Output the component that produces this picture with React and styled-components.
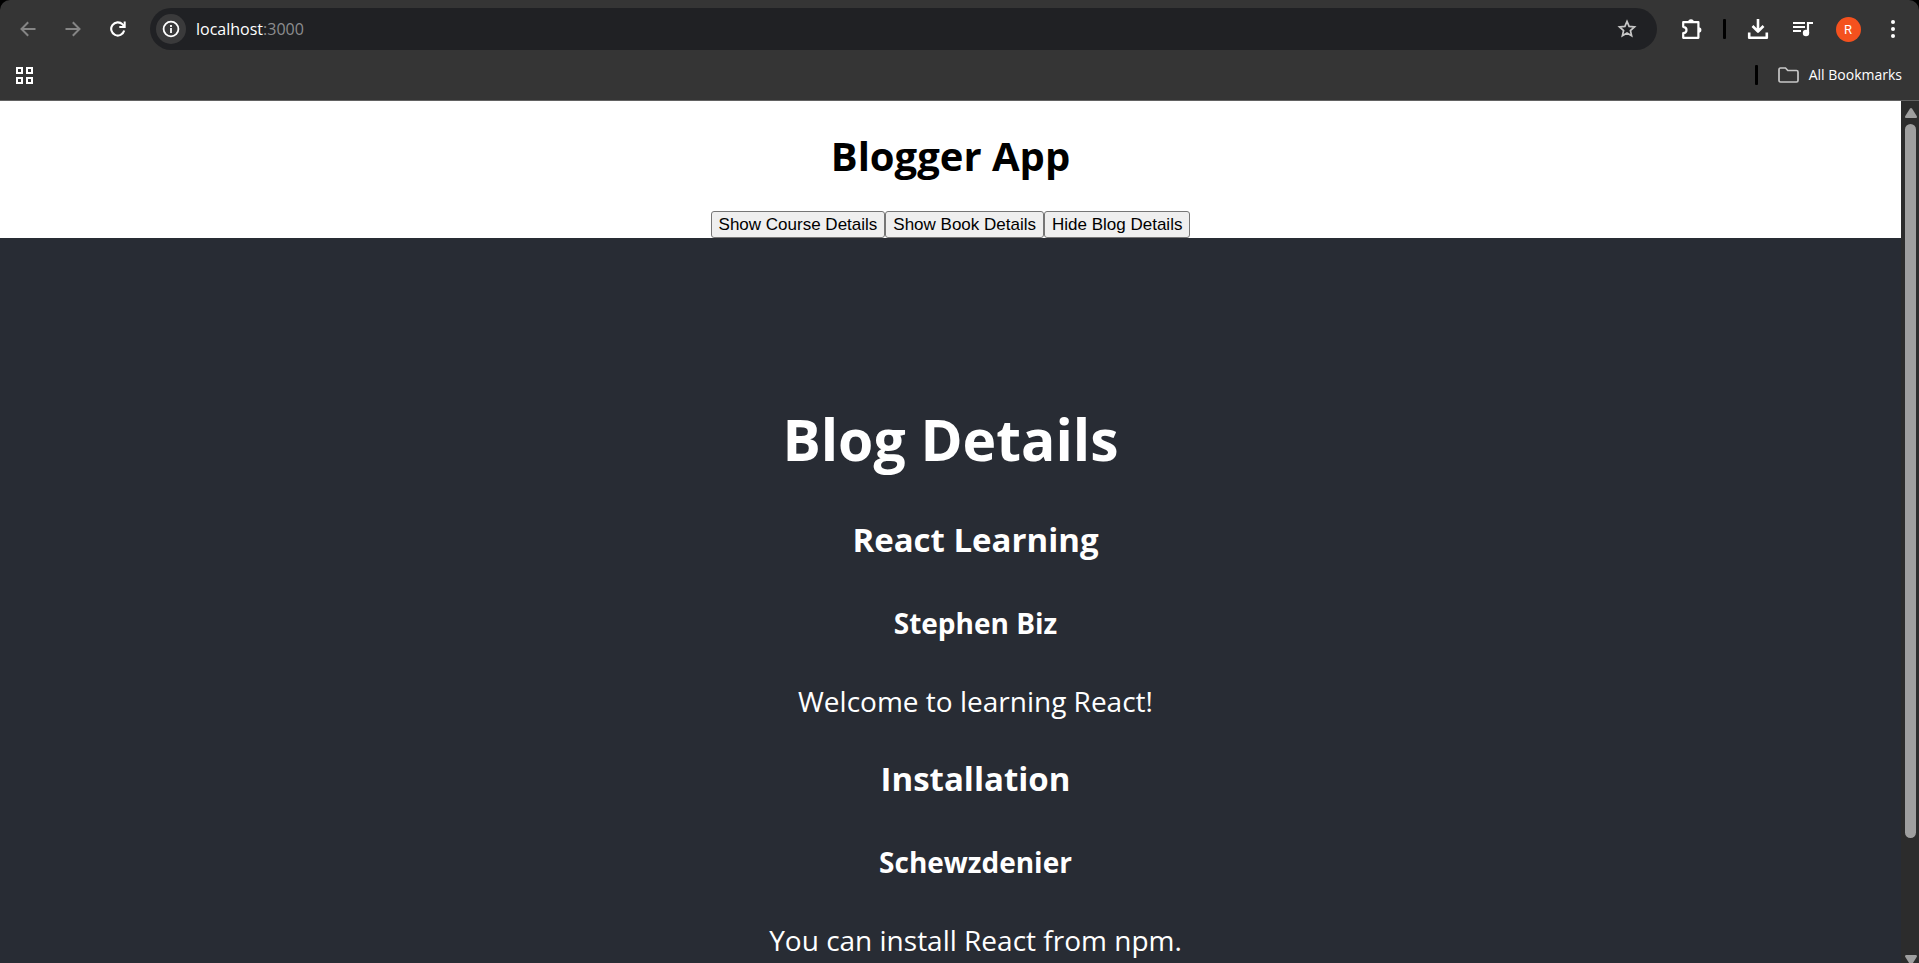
import React from "react";
import styled, { createGlobalStyle } from "styled-components";

const GlobalStyle = createGlobalStyle`
  *, *::before, *::after { box-sizing: border-box; }
  body { margin: 0; background: #000; }
`;

const uiFont = `"Segoe UI", "Open Sans", sans-serif`;

const Window = styled.div`
  display: flex;
  flex-direction: column;
  height: 100vh;
  overflow: hidden;
  font-family: ${uiFont};
`;

const Chrome = styled.header`
  flex: none;
  background: #353535;
  border-bottom: 1px solid #626262;
  border-radius: 10px 10px 0 0;
  color: #fff;
`;

const Toolbar = styled.div`
  display: flex;
  align-items: center;
  height: 58px;
  padding: 0 10px 0 12px;
`;

const NavGroup = styled.nav`
  display: flex;
  gap: 13px;
  margin-right: 16px;
`;

const IconButton = styled.button`
  display: grid;
  place-items: center;
  flex: none;
  width: 32px;
  height: 32px;
  padding: 0;
  border: 0;
  border-radius: 50%;
  background: ${(p) => p.$fill || "transparent"};
  color: ${(p) => p.$tone || "#fff"};
  svg { display: block; }
`;

const AddressBar = styled.div`
  display: flex;
  align-items: center;
  flex: 1;
  height: 42px;
  padding: 0 14px 0 6px;
  border-radius: 21px;
  background: #202124;
`;

const SiteInfo = styled(IconButton)`
  width: 30px;
  height: 30px;
`;

const Address = styled.div`
  flex: 1;
  margin-left: 10px;
  font-size: 16px;
  line-height: 24px;
  color: #8c8d8f;
  span { color: #fff; }
`;

const Actions = styled.div`
  display: flex;
  align-items: center;
  gap: 13px;
  margin-left: 19px;
`;

const Divider = styled.span`
  width: 3px;
  height: 20px;
  margin: 0 3px 0 2px;
  border-radius: 1px;
  background: #000;
`;

const Avatar = styled.span`
  display: grid;
  place-items: center;
  width: 25px;
  height: 25px;
  border-radius: 50%;
  background: #f4511e;
  color: #fff;
  font: 13px/25px Roboto, sans-serif;
`;

const BookmarkBar = styled.div`
  display: flex;
  align-items: center;
  height: 42px;
  padding: 0 17px 8px 8px;
`;

const AllBookmarks = styled.button`
  display: flex;
  align-items: center;
  gap: 10px;
  margin-left: 17px;
  padding: 0;
  border: 0;
  background: none;
  color: #fff;
  font: 14px/20px ${uiFont};
`;

const Spacer = styled.div`
  flex: 1;
`;

const Viewport = styled.div`
  display: flex;
  flex: 1;
  min-height: 0;
`;

const Page = styled.main`
  flex: 1;
  overflow: hidden;
  background: #fff;
  text-align: center;
`;

const AppTitle = styled.h1`
  margin: 0;
  padding: 28px 0;
  font-size: 40px;
  line-height: 54px;
  color: #000;
`;

const ButtonRow = styled.div`
  display: flex;
  justify-content: center;
`;

const ToggleButton = styled.button`
  height: 27px;
  padding: 0 7px;
  border: 1px solid #767676;
  border-radius: 3px;
  background: #efefef;
  color: #000;
  font: 17px/24px "Liberation Sans", Arial, sans-serif;
`;

const BlogSection = styled.section`
  display: flex;
  flex-direction: column;
  align-items: center;
  justify-content: center;
  min-height: calc(100vh - 101px);
  padding-top: 20px;
  background: #282c34;
  color: #fff;
`;

const SectionTitle = styled.h1`
  margin: 0 0 38px;
  font-size: 57px;
  line-height: 80px;
`;

const BlogList = styled.ul`
  display: flex;
  flex-direction: column;
  gap: 35px;
  margin: 0;
  padding: 0 0 0 50px;
  list-style: none;
`;

const BlogTitle = styled.h3`
  margin: 0 0 40px;
  font-size: 33px;
  line-height: 46px;
`;

const BlogAuthor = styled.h4`
  margin: 0 0 38px;
  font-size: 28px;
  line-height: 40px;
`;

const BlogText = styled.p`
  margin: 0;
  font-size: 28px;
  line-height: 40px;
`;

const Scrollbar = styled.div`
  display: flex;
  flex-direction: column;
  align-items: center;
  flex: none;
  width: 18px;
  padding: 7px 0 0 1px;
  background: #2c2c2c;
  color: #9f9f9f;
  svg { display: block; flex: none; }
`;

const Track = styled.div`
  flex: 1;
  width: 11px;
  margin: 6px 0 1px;
`;

const Thumb = styled.div`
  height: 86%;
  border-radius: 6px;
  background: currentColor;
`;

const Svg = ({ w = 24, h = w, box = `0 0 ${w} ${h}`, children }) => (
  <svg width={w} height={h} viewBox={box} fill="none" stroke="currentColor" strokeWidth="2" aria-hidden="true">
    {children}
  </svg>
);

const BackIcon = () => (
  <Svg w={16}><path d="M15.5 8H2M8.2 1.2 1.5 8l6.700 6.800" /></Svg>
);
const ForwardIcon = () => (
  <Svg w={16}><path d="M.5 8H14M7.8 1.2 14.5 8l-6.700 6.800" /></Svg>
);
const ReloadIcon = () => (
  <Svg w={16}>
    <path d="M14.2 9.6A6.6 6.6 0 1 1 12.6 3.4L14 5" strokeWidth="2.1" />
    <path d="M14.7.5v5.6H9.3" strokeWidth="2" />
  </Svg>
);
const InfoIcon = () => (
  <Svg w={18}>
    <circle cx="9" cy="9" r="7.4" strokeWidth="1.8" />
    <path d="M9 8v5M9 5v2" strokeWidth="1.8" />
  </Svg>
);
const StarIcon = () => (
  <Svg w={20}>
    <path d="m10 2.4 2.1 5 5.4.5-4.1 3.6 1.2 5.3L10 14l-4.600 2.800 1.200-5.300-4.100-3.600 5.400-.5z" strokeWidth="1.7" />
  </Svg>
);
const ExtensionIcon = () => (
  <Svg w={22}>
    <path d="M2.2 4.2h15.2v15.6H2.2v-4.6c2.2-.2 3.3-1.4 3.3-3.2S4.4 9 2.2 8.8z" strokeWidth="2.2" strokeLinejoin="round" />
    <path d="M7.2 4a2.8 2.8 0 0 1 5.6 0zM17.6 9.2a2.8 2.8 0 0 1 0 5.6z" fill="currentColor" stroke="none" />
  </Svg>
);
const DownloadIcon = () => (
  <Svg w={22}>
    <path d="M11 1v12M5.5 8l5.5 5.5L16.5 8M2.2 14.5v5.3h17.6v-5.3" strokeWidth="2.6" strokeLinejoin="round" />
  </Svg>
);
const MusicIcon = () => (
  <Svg w={20} h={16}>
    <path d="M0 2h12M0 6h12M0 10h8M15 12V2h5" strokeWidth="2.2" />
    <circle cx="13" cy="12" r="3.2" fill="currentColor" stroke="none" />
  </Svg>
);
const MenuIcon = () => (
  <Svg w={20}>
    <g fill="currentColor" stroke="none">
      <circle cx="10" cy="3" r="2" /><circle cx="10" cy="10" r="2" /><circle cx="10" cy="17" r="2" />
    </g>
  </Svg>
);
const AppsIcon = () => (
  <Svg w={19}>
    <path d="M2 2h5v5H2zM12 2h5v5h-5zM2 12h5v5H2zM12 12h5v5h-5z" />
  </Svg>
);
const FolderIcon = () => (
  <Svg w={21} h={16}>
    <path d="M1 2.5Q1 1 2.5 1h5l2.3 2.5h8.7Q20 3.5 20 5v8.5q0 1.5-1.5 1.5h-16Q1 15 1 13.5z" stroke="#c7c7c7" strokeWidth="1.7" />
  </Svg>
);
const UpCaret = () => (
  <svg width="12" height="10" viewBox="0 0 12 10" aria-hidden="true">
    <path d="M1 10h10q1.5-.5.7-2L7 .5q-1-1-2 0L.3 8Q-.5 9.500 1 10z" fill="currentColor" />
  </svg>
);
const DownCaret = () => (
  <svg width="12" height="8" viewBox="0 0 12 8" aria-hidden="true">
    <path d="M1 0h10q1.500.5.700 2L7 9.500q-1 1-2 0L.300 2Q-.500.500 1 0z" fill="currentColor" />
  </svg>
);

const blogs = [
  { title: "React Learning", author: "Stephen Biz", text: "Welcome to learning React!" },
  { title: "Installation", author: "Schewzdenier", text: "You can install React from npm." },
];

export default function App() {
  return (
    <Window>
      <GlobalStyle />
      <Chrome>
        <Toolbar>
          <NavGroup>
            <IconButton aria-label="Back" $tone="#858585"><BackIcon /></IconButton>
            <IconButton aria-label="Forward" $tone="#858585"><ForwardIcon /></IconButton>
            <IconButton aria-label="Reload"><ReloadIcon /></IconButton>
          </NavGroup>
          <AddressBar>
            <SiteInfo aria-label="Site information" $fill="#3a3a3b"><InfoIcon /></SiteInfo>
            <Address><span>localhost</span>:3000</Address>
            <IconButton aria-label="Bookmark this tab" $tone="#c7c7c7"><StarIcon /></IconButton>
          </AddressBar>
          <Actions>
            <IconButton aria-label="Extensions"><ExtensionIcon /></IconButton>
            <Divider />
            <IconButton aria-label="Downloads"><DownloadIcon /></IconButton>
            <IconButton aria-label="Media controls"><MusicIcon /></IconButton>
            <IconButton aria-label="Profile"><Avatar>R</Avatar></IconButton>
            <IconButton aria-label="Menu"><MenuIcon /></IconButton>
          </Actions>
        </Toolbar>
        <BookmarkBar>
          <IconButton aria-label="Apps"><AppsIcon /></IconButton>
          <Spacer />
          <Divider />
          <AllBookmarks><FolderIcon />All Bookmarks</AllBookmarks>
        </BookmarkBar>
      </Chrome>
      <Viewport>
        <Page>
          <AppTitle>Blogger App</AppTitle>
          <ButtonRow>
            <ToggleButton>Show Course Details</ToggleButton>
            <ToggleButton>Show Book Details</ToggleButton>
            <ToggleButton>Hide Blog Details</ToggleButton>
          </ButtonRow>
          <BlogSection>
            <SectionTitle>Blog Details</SectionTitle>
            <BlogList>
              {blogs.map((blog) => (
                <li key={blog.title}>
                  <BlogTitle>{blog.title}</BlogTitle>
                  <BlogAuthor>{blog.author}</BlogAuthor>
                  <BlogText>{blog.text}</BlogText>
                </li>
              ))}
            </BlogList>
          </BlogSection>
        </Page>
        <Scrollbar aria-hidden="true">
          <UpCaret />
          <Track><Thumb /></Track>
          <DownCaret />
        </Scrollbar>
      </Viewport>
    </Window>
  );
}
